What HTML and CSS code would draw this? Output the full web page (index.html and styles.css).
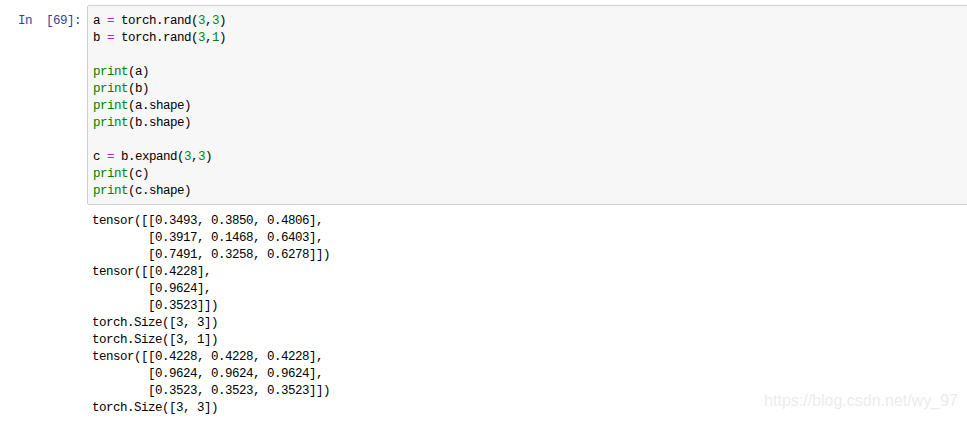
FILE: index.html
```html
<!DOCTYPE html>
<html>
<head>
<meta charset="utf-8">
<link rel="stylesheet" href="styles.css">
</head>
<body>
<div class="cell">
  <div class="input">
    <div class="prompt">In&nbsp;&nbsp;[69]:</div>
    <div class="code"><pre class="src">a <span class="op">=</span> torch.rand(<span class="num">3</span>,<span class="num">3</span>)
b <span class="op">=</span> torch.rand(<span class="num">3</span>,<span class="num">1</span>)

<span class="bi">print</span>(a)
<span class="bi">print</span>(b)
<span class="bi">print</span>(a.shape)
<span class="bi">print</span>(b.shape)

c <span class="op">=</span> b.expand(<span class="num">3</span>,<span class="num">3</span>)
<span class="bi">print</span>(c)
<span class="bi">print</span>(c.shape)</pre></div>
  </div>
  <div class="output">
    <div class="out-prompt"></div>
    <pre class="out">tensor([[0.3493, 0.3850, 0.4806],
        [0.3917, 0.1468, 0.6403],
        [0.7491, 0.3258, 0.6278]])
tensor([[0.4228],
        [0.9624],
        [0.3523]])
torch.Size([3, 3])
torch.Size([3, 1])
tensor([[0.4228, 0.4228, 0.4228],
        [0.9624, 0.9624, 0.9624],
        [0.3523, 0.3523, 0.3523]])
torch.Size([3, 3])</pre>
  </div>
</div>
<div class="watermark">https://blog.csdn.net/wy_97</div>
</body>
</html>
```
FILE: styles.css
```css
html, body {
  margin: 0;
  padding: 0;
  background: #fff;
  overflow: hidden;
}
body {
  position: relative;
  width: 967px;
  height: 421px;
  font-family: "Liberation Mono", "DejaVu Sans Mono", monospace;
}
.cell {
  padding-top: 5px;
  display: flex;
  flex-direction: column;
}
.input {
  display: flex;
  align-items: flex-start;
}
.prompt {
  width: 81px;
  flex: 0 0 81px;
  padding-right: 6px;
  padding-top: 8px;
  text-align: right;
  color: #303f9f;
  font-size: 12.5px;
  letter-spacing: -0.5px;
  line-height: 17px;
  white-space: nowrap;
}
.code {
  flex: 1;
  margin-right: -12px;
  border: 1px solid #cfcfcf;
  border-radius: 2px;
  background: #f7f7f7;
  padding: 7px 5px 4px 5px;
}
pre {
  margin: 0;
  font-family: "Liberation Mono", "DejaVu Sans Mono", monospace;
  font-size: 12.5px;
  letter-spacing: -0.5px;
  line-height: 17px;
  color: #000;
}
.op { color: #aa22ff; }
.num { color: #008800; }
.bi { color: #008000; }
.output {
  display: flex;
  padding-top: 8px;
}
.out-prompt {
  flex: 0 0 92px;
}
.out {
  flex: 1;
}
.watermark {
  position: absolute;
  right: 9px;
  top: 392px;
  font-family: "Liberation Sans", Arial, sans-serif;
  font-size: 16px;
  line-height: 18px;
  color: #ececec;
  white-space: nowrap;
}
```
